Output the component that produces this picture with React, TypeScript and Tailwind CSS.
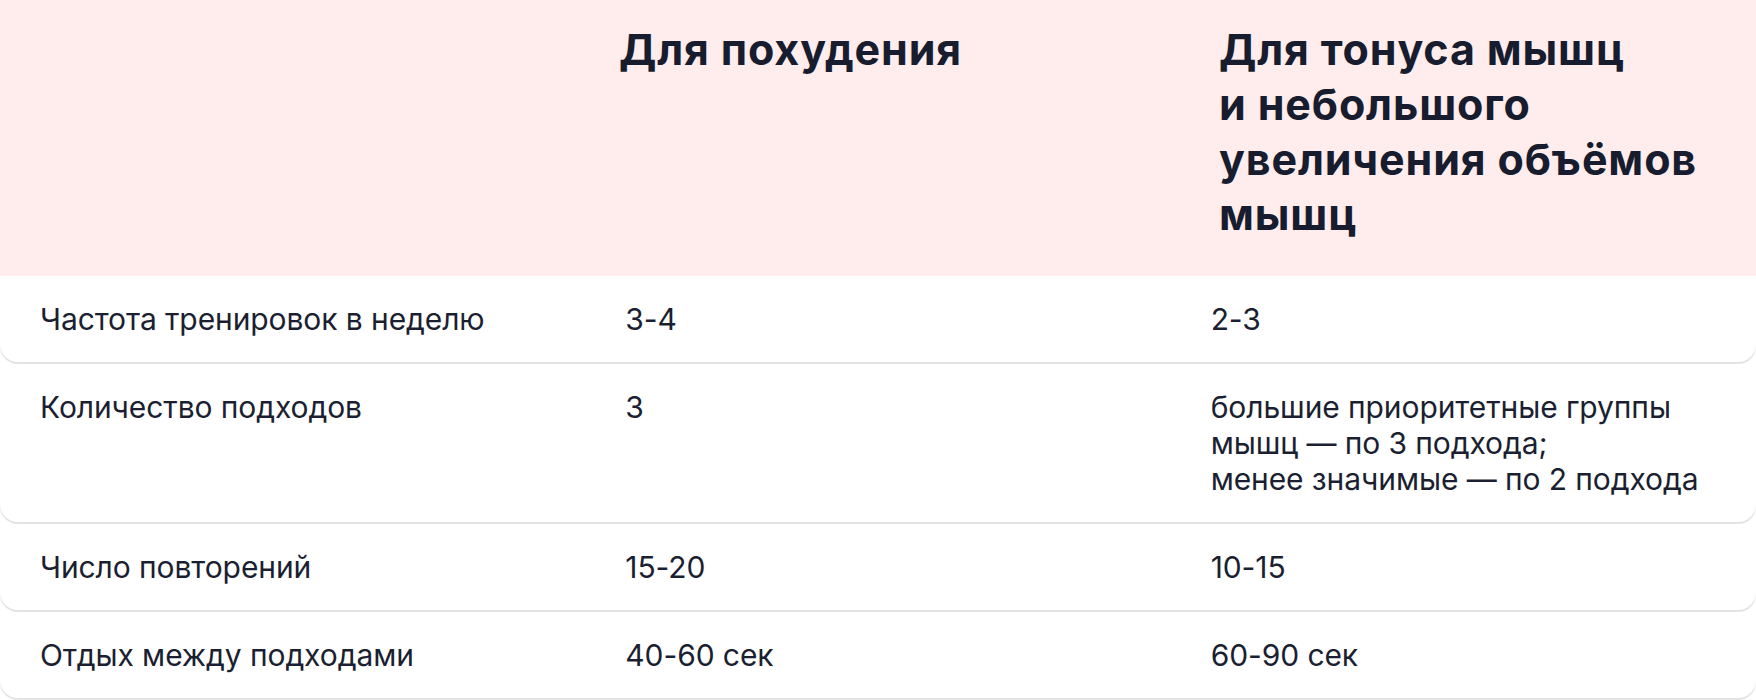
const rows = [
  { label: 'Частота тренировок в неделю', loss: ['3-4'], tone: ['2-3'] },
  {
    label: 'Количество подходов',
    loss: ['3'],
    tone: ['большие приоритетные группы', 'мышц — по 3 подхода;', 'менее значимые — по 2 подхода'],
  },
  { label: 'Число повторений', loss: ['15-20'], tone: ['10-15'] },
  { label: 'Отдых между подходами', loss: ['40-60 сек'], tone: ['60-90 сек'] },
]

const toneTitle = ['Для тонуса мышц', 'и небольшого', 'увеличения объёмов', 'мышц']

export default function App() {
  return (
    <div className="min-h-screen w-full bg-white font-['Inter',sans-serif] text-[#1b1f31]">
      <div className="grid h-[276px] grid-cols-[619px_600px_1fr] bg-[#ffecec] pt-[22px] text-[43px] font-bold leading-[55px] tracking-[0.02em] text-[#171c2e]">
        <div />
        <div className="whitespace-nowrap">Для похудения</div>
        <div>
          {toneTitle.map((line) => (
            <div key={line} className="whitespace-nowrap">
              {line}
            </div>
          ))}
        </div>
      </div>

      <div className="flex flex-col gap-[2px]">
        {rows.map((row) => (
          <div
            key={row.label}
            className="grid grid-cols-3 rounded-b-[18px] bg-white py-[25px] text-[30px] leading-[36px] tracking-[-0.003em] shadow-[0_2px_1px_#e2e2e2]"
          >
            <div className="pl-[40px] whitespace-nowrap">{row.label}</div>
            <div className="pl-[40px]">
              {row.loss.map((line) => (
                <div key={line} className="whitespace-nowrap">
                  {line}
                </div>
              ))}
            </div>
            <div className="pl-[40px]">
              {row.tone.map((line) => (
                <div key={line} className="whitespace-nowrap">
                  {line}
                </div>
              ))}
            </div>
          </div>
        ))}
      </div>
    </div>
  )
}
